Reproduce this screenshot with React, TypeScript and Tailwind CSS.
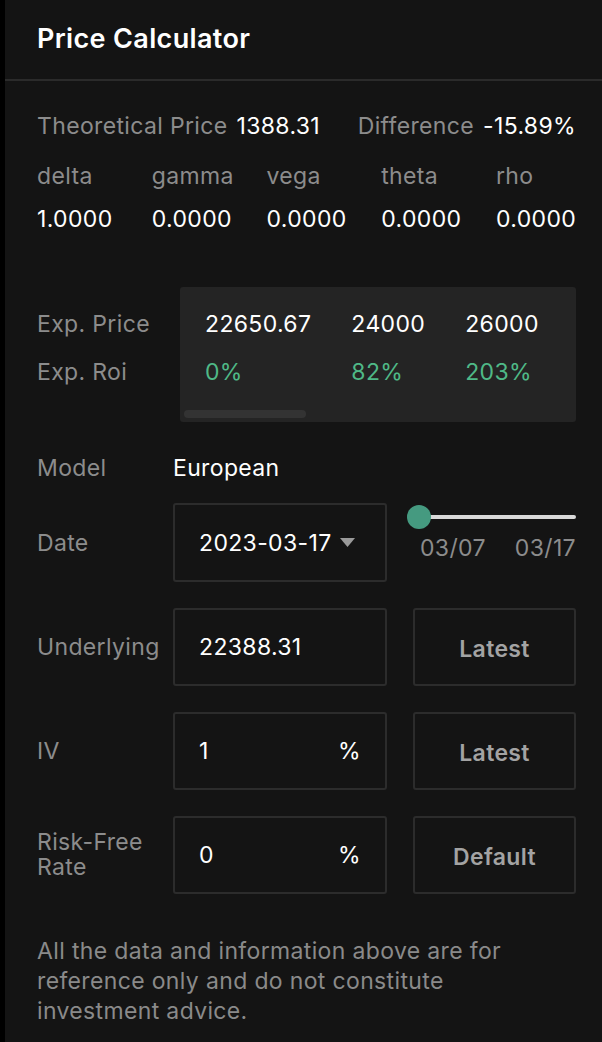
import { useState } from 'react';

const greeks = [
  { name: 'delta', value: '1.0000' },
  { name: 'gamma', value: '0.0000' },
  { name: 'vega', value: '0.0000' },
  { name: 'theta', value: '0.0000' },
  { name: 'rho', value: '0.0000' },
];

const expected = [
  { price: '22650.67', roi: '0%' },
  { price: '24000', roi: '82%' },
  { price: '26000', roi: '203%' },
];

function Field({ value, suffix }: { value: string; suffix?: string }) {
  return (
    <div className="flex h-[78px] w-[214px] shrink-0 items-center justify-between rounded-[3px] border-2 border-[#2c2c2c] px-[24px] text-white">
      <span>{value}</span>
      {suffix && <span>{suffix}</span>}
    </div>
  );
}

function SideButton({ label }: { label: string }) {
  return (
    <button className="flex h-[78px] w-[163px] shrink-0 items-center justify-center rounded-[3px] border-2 border-[#2c2c2c] pt-[3px] font-semibold text-[#a3a3a3]">
      {label}
    </button>
  );
}

export default function App() {
  const [day] = useState('2023-03-17');

  return (
    <div
      className="flex min-h-screen bg-black pl-[5px] text-[23px] leading-[28px] tracking-[0.35px]"
      style={{ fontFamily: 'Inter, "Noto Sans", sans-serif' }}
    >
      <div className="min-w-0 flex-1 bg-[#141414]">
        <div className="flex h-[81px] items-center border-b-2 border-[#2b2b2b] px-[32px] pb-[2px]">
          <h1 className="text-[27px] font-semibold text-white">Price Calculator</h1>
        </div>

        <div className="pl-[32px] pr-[26px]">
          <div className="mt-[31px] flex justify-between">
            <div className="flex gap-[9px]">
              <span className="text-[#8c8c8c]">Theoretical Price</span>
              <span className="text-white">1388.31</span>
            </div>
            <div className="flex gap-[9px]">
              <span className="text-[#8c8c8c]">Difference</span>
              <span className="text-white">-15.89%</span>
            </div>
          </div>

          <div className="mt-[22px] flex justify-between">
            {greeks.map(g => (
              <div key={g.name} className="flex w-[80px] flex-col gap-[15px]">
                <span className="text-[#8c8c8c]">{g.name}</span>
                <span className="text-white">{g.value}</span>
              </div>
            ))}
          </div>

          <div className="mt-[54px] flex">
            <div className="flex w-[143px] shrink-0 flex-col gap-[20px] pt-[23px]">
              <span className="text-[#8c8c8c]">Exp. Price</span>
              <span className="text-[#8c8c8c]">Exp. Roi</span>
            </div>
            <div className="h-[135px] min-w-0 flex-1 overflow-hidden rounded-[3px] bg-[#242424] px-[4px]">
              <div className="flex gap-[40px] pl-[21px] pt-[23px]">
                {expected.map(e => (
                  <div key={e.price} className="flex shrink-0 flex-col gap-[20px]">
                    <span className="text-white">{e.price}</span>
                    <span className="text-[#4fb987]">{e.roi}</span>
                  </div>
                ))}
              </div>
              <div className="mt-[24px] h-[8px] w-[122px] rounded-full bg-[#333333]" />
            </div>
          </div>

          <div className="mt-[32px] flex">
            <span className="w-[136px] shrink-0 text-[#8c8c8c]">Model</span>
            <span className="text-white">European</span>
          </div>

          <div className="mt-[21px] flex items-center">
            <span className="w-[136px] shrink-0 text-[#8c8c8c]">Date</span>
            <div className="flex h-[79px] w-[214px] shrink-0 items-center gap-[7px] rounded-[3px] border-2 border-[#2c2c2c] pl-[24px] text-white">
              <span>{day}</span>
              <svg width="17" height="12" viewBox="0 0 17 12">
                <path d="M1 1h15L8.5 10z" fill="#9a9a9a" />
              </svg>
            </div>
            <div className="ml-[20px] flex min-w-0 flex-1 flex-col self-start pt-[2px]">
              <div className="relative h-[24px]">
                <div className="absolute left-[12px] right-0 top-[10px] h-[4px] rounded-full bg-[#d9d9d9]" />
                <div className="absolute left-0 top-0 h-[24px] w-[24px] rounded-full bg-[#459a80]" />
              </div>
              <div className="mt-[5px] flex justify-between pl-[13px] text-[#8c8c8c]">
                <span>03/07</span>
                <span>03/17</span>
              </div>
            </div>
          </div>

          <div className="mt-[26px] flex items-center">
            <span className="w-[136px] shrink-0 self-start pt-[25px] text-[#8c8c8c]">Underlying</span>
            <Field value="22388.31" />
            <div className="ml-[26px]"><SideButton label="Latest" /></div>
          </div>

          <div className="mt-[26px] flex items-center">
            <span className="w-[136px] shrink-0 text-[#8c8c8c]">IV</span>
            <Field value="1" suffix="%" />
            <div className="ml-[26px]"><SideButton label="Latest" /></div>
          </div>

          <div className="mt-[26px] flex items-center">
            <span className="w-[136px] shrink-0 leading-[25px] text-[#8c8c8c]">Risk-Free<br />Rate</span>
            <Field value="0" suffix="%" />
            <div className="ml-[26px]"><SideButton label="Default" /></div>
          </div>

          <p className="mt-[42px] max-w-[520px] pb-[20px] leading-[30px] text-[#8a8a8a]">
            All the data and information above are for reference only and do not constitute investment advice.
          </p>
        </div>
      </div>
    </div>
  );
}
